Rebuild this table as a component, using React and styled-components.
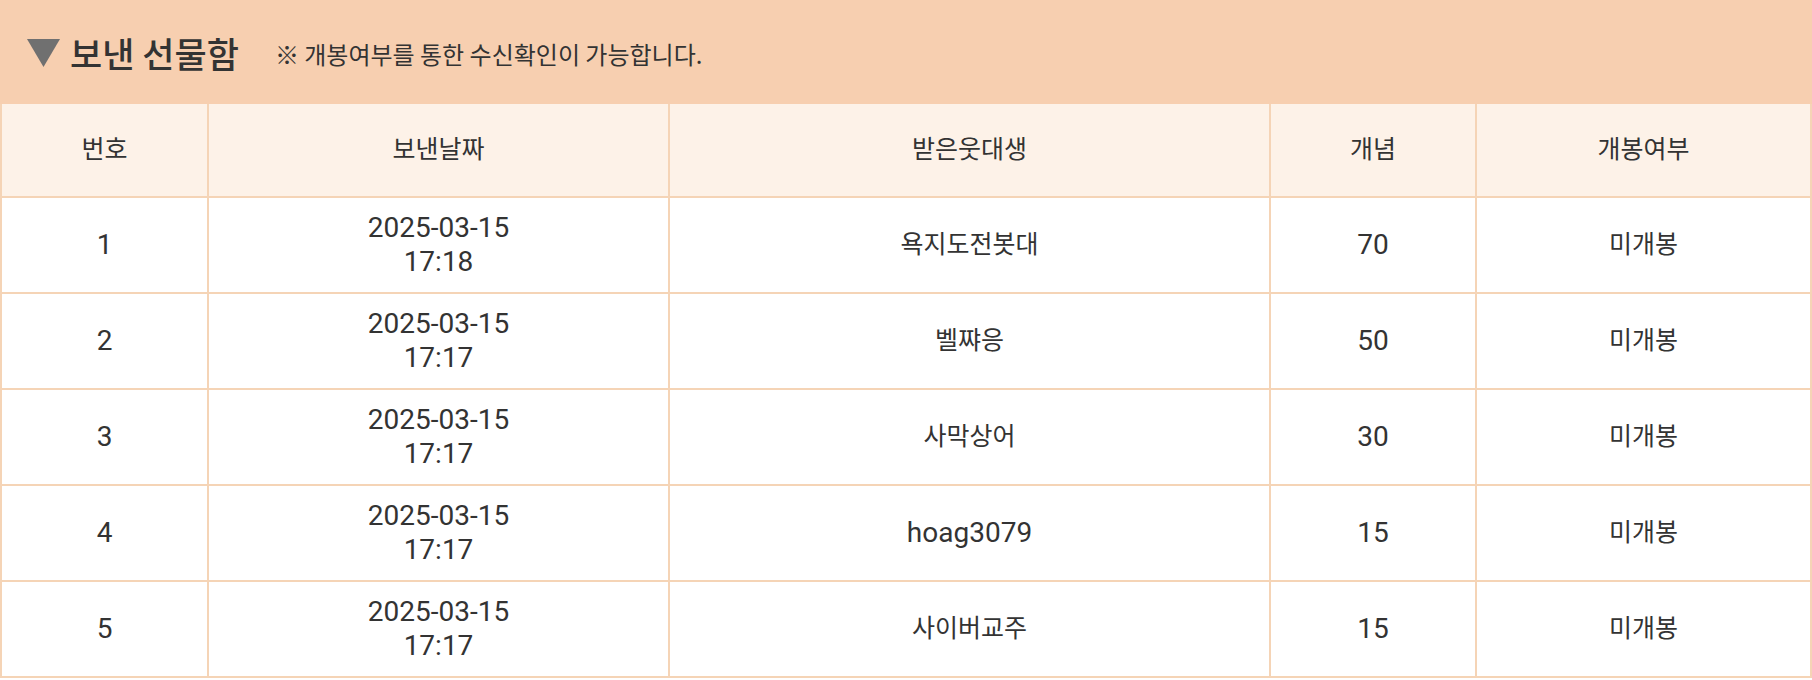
import styled, { createGlobalStyle } from "styled-components"

const GlobalStyle = createGlobalStyle`
body {
  margin: 0;
  background: #fff;
  font-family: Roboto, "Noto Sans CJK KR", sans-serif;
  color: #333;
}
`

const Container = styled.div`
width: 1812px;
`
const TopBar = styled.div`
height: 104px;
background: #f7cfb0;
display: flex;
align-items: center;
padding-left: 27px;
box-sizing: border-box;
`
const Arrow = styled.svg`
width: 33px;
height: 28px;
margin-right: 10px;
margin-top: 1px;
`
const Title = styled.h2`
margin: 0;
font-family: "Noto Sans CJK KR", sans-serif;
font-size: 35px;
font-weight: 500;
color: #333;
`
const Note = styled.span`
margin-left: 36px;
margin-top: 2px;
font-family: "Noto Sans CJK KR", sans-serif;
font-size: 24px;
color: #333;
`
const Row = styled.div`
display: grid;
grid-template-columns: 207px 461px 601px 206px 1fr;
height: ${props => props.head ? "94px" : "96px"};
background: ${props => props.head ? "#fdf2e8" : "#fff"};
border-bottom: 2px solid #f5d4b6;
border-left: 2px solid #f5d4b6;
box-sizing: border-box;
`
const Cell = styled.div`
display: flex;
align-items: center;
justify-content: center;
text-align: center;
border-right: 2px solid #f5d4b6;
font-size: ${props => props.ko ? "25px" : "28px"};
line-height: 34px;
color: #333;
`

const rows = [
  { no: 1, time: "17:18", name: "욕지도전봇대", count: 70 },
  { no: 2, time: "17:17", name: "벨쨔응", count: 50 },
  { no: 3, time: "17:17", name: "사막상어", count: 30 },
  { no: 4, time: "17:17", name: "hoag3079", count: 15, latin: true },
  { no: 5, time: "17:17", name: "사이버교주", count: 15 },
]

const App = () => {
  return (
    <Container>
      <GlobalStyle />
      <TopBar>
        <Arrow viewBox="0 0 33 28">
          <polygon points="0,0 33,0 16.5,28" fill="#707070" />
        </Arrow>
        <Title>보낸 선물함</Title>
        <Note>※ 개봉여부를 통한 수신확인이 가능합니다.</Note>
      </TopBar>

      <Row head>
        <Cell ko>번호</Cell>
        <Cell ko>보낸날짜</Cell>
        <Cell ko>받은웃대생</Cell>
        <Cell ko>개념</Cell>
        <Cell ko>개봉여부</Cell>
      </Row>

      {rows.map(r => (
        <Row key={r.no}>
          <Cell>{r.no}</Cell>
          <Cell>2025-03-15<br />{r.time}</Cell>
          <Cell ko={!r.latin}>{r.name}</Cell>
          <Cell>{r.count}</Cell>
          <Cell ko>미개봉</Cell>
        </Row>
      ))}
    </Container>
  )
}

export default App
